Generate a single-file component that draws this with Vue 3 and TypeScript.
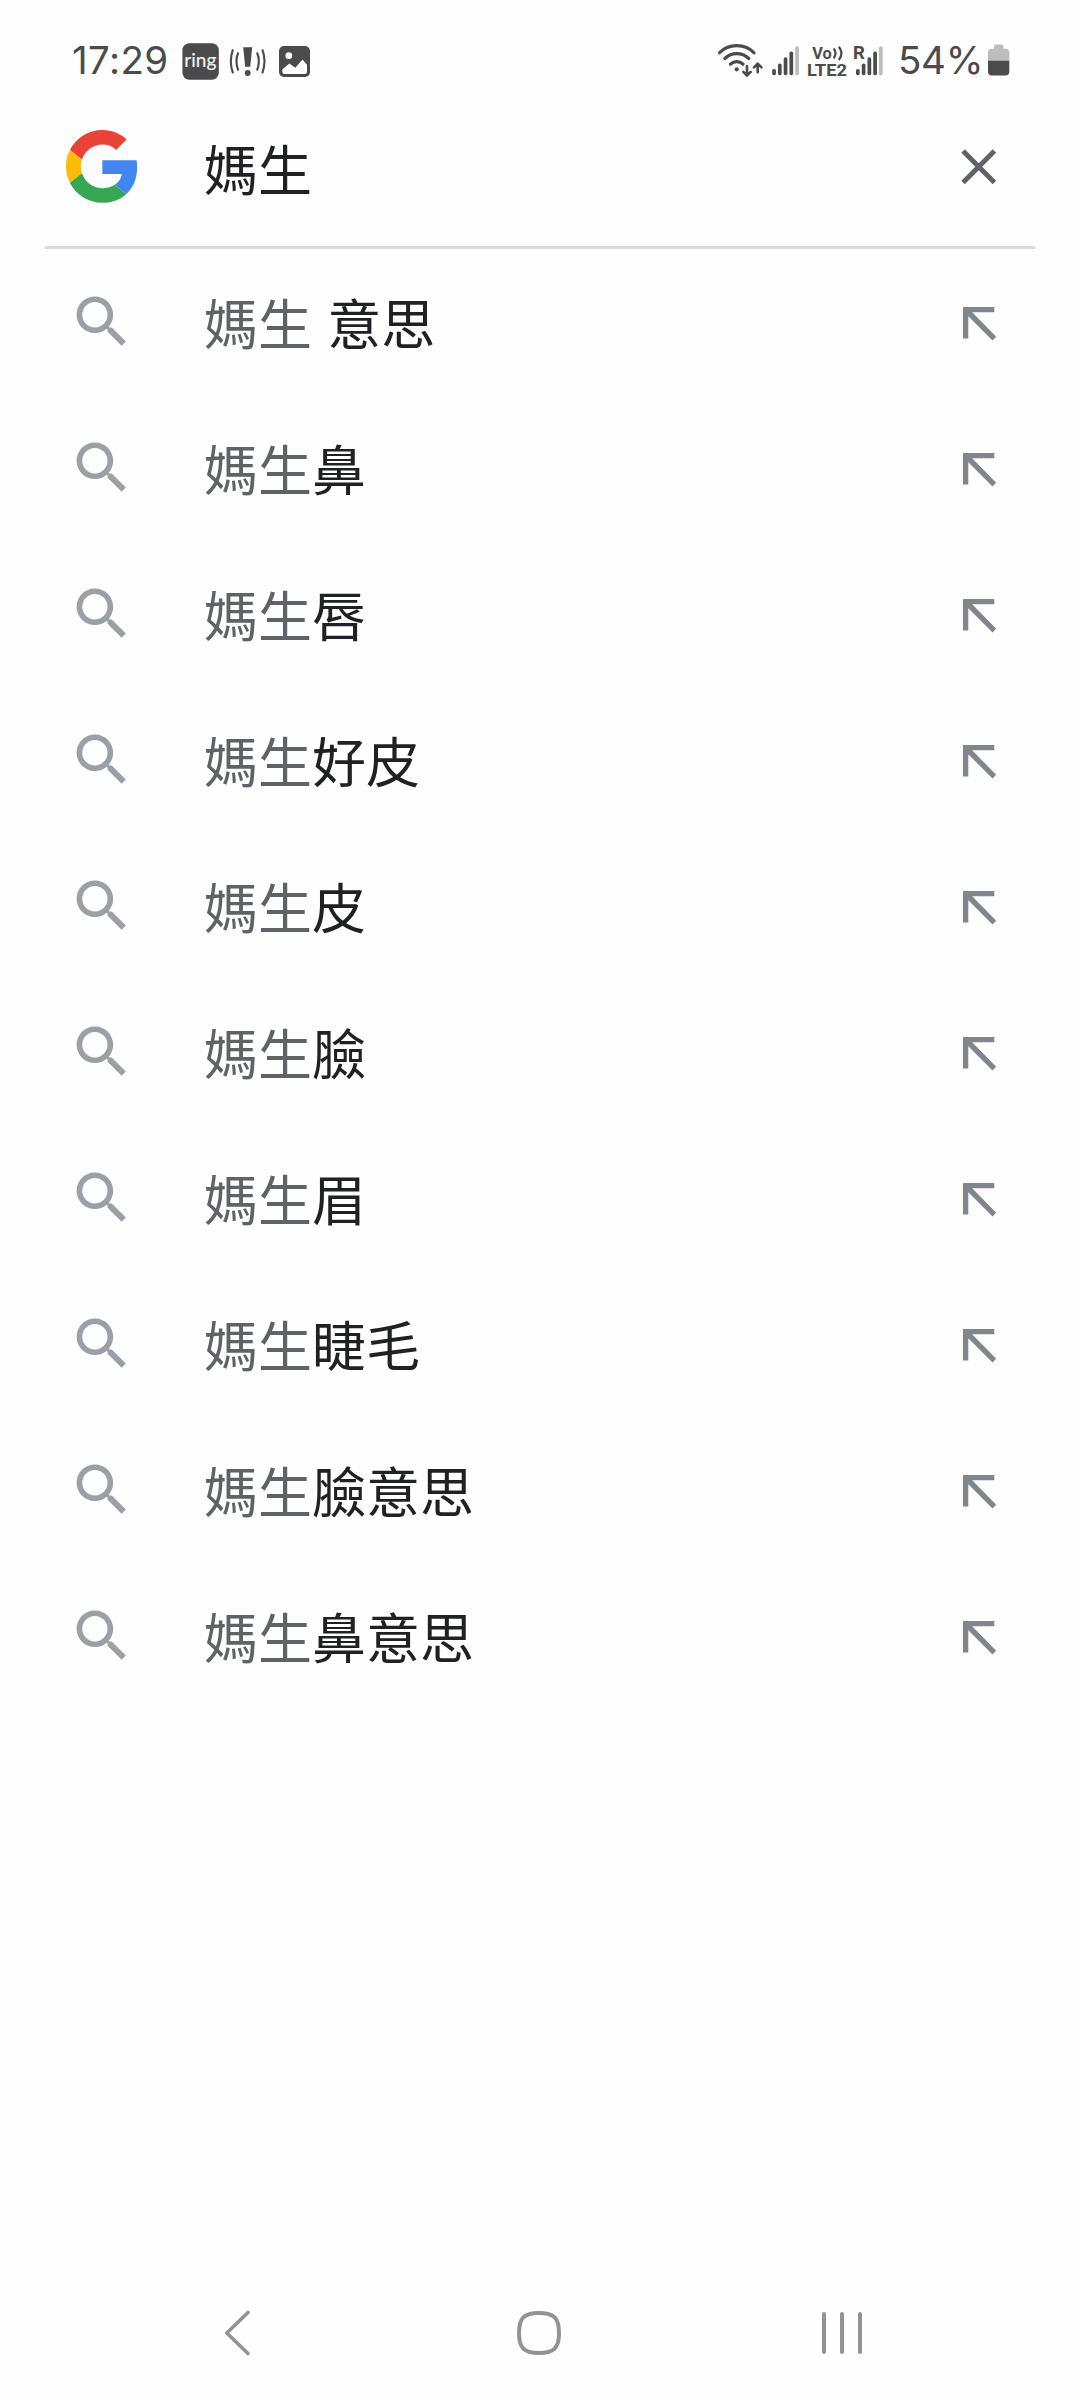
<script setup lang="ts">
interface Suggestion {
  typed: string
  rest: string
}

interface Bar {
  x: number
  top: number
  dim: boolean
}

const query = '媽生'

const suggestions: Suggestion[] = [' 意思', '鼻', '唇', '好皮', '皮', '臉', '眉', '睫毛', '臉意思', '鼻意思'].map(
  (rest) => ({ typed: query, rest }),
)

const makeBars = (start: number): Bar[] =>
  [69, 63.5, 57.2, 51.6, 46.2].map((top, i) => ({ x: start + i * 5.75, top, dim: i === 4 }))

const simOne = makeBars(772.2)
const simTwo = makeBars(856)
</script>

<template>
  <div class="screen">
    <header class="status">
      <span class="clock">17:29</span>
      <svg class="ring" width="38" height="42" viewBox="182 40 38 42">
        <rect x="182.4" y="43.2" width="36.4" height="36.6" rx="7" fill="#4b4b4b" />
        <text x="200.3" y="67.4" text-anchor="middle" font-size="20" textLength="32" lengthAdjust="spacingAndGlyphs" fill="#f0f0f0" stroke="#f0f0f0" stroke-width="0.2">ring</text>
      </svg>
      <svg class="alert" width="38" height="42" viewBox="229 40 38 42" fill="none" stroke="#4b4b4b" stroke-width="2.1">
        <path d="M233 49.3Q228.6 61 233 73.3M238.3 52.5Q234.6 61 238.3 70.5M262.3 49.3Q266.7 61 262.3 73.3M257 52.5Q260.7 61 257 70.5" />
        <path d="M243.2 47.2H252.2L250.2 66.7H245.2Z" fill="#4b4b4b" stroke="none" />
        <circle cx="247.7" cy="73" r="2.9" fill="#4b4b4b" stroke="none" />
      </svg>
      <svg class="photo" width="32" height="42" viewBox="279 40 32 42">
        <rect x="279" y="46" width="31" height="31" rx="5" fill="#4b4b4b" />
        <circle cx="288.8" cy="55.7" r="3.4" fill="#fff" />
        <path d="M282.3 69.5 289.3 63.5 295.3 67.8 302.5 59.5 307 64.7V71.5Q307 74 304.5 74H284.8Q282.3 74 282.3 71.5Z" fill="#fff" />
      </svg>
      <span class="gap"></span>
      <svg width="48" height="42" viewBox="716 40 48 42" fill="none" stroke="#4b4b4b" stroke-width="3.2" stroke-linecap="round" stroke-linejoin="round">
        <path d="M719.5 52.8Q726 45.6 736.8 45.6T754 52.8M724.8 58.5Q730 53.6 736.8 53.6T748.8 58.5M730.5 64.2Q733.3 61.6 736.8 61.6T743 64.2" />
        <circle cx="736.7" cy="69.3" r="2.1" fill="#4b4b4b" stroke="none" />
        <path d="M747 66V75M743.3 71.8 747 75.5 750.7 71.8M757.7 72.3V64M754 67.3 757.7 63.6 761.4 67.3" stroke-width="2.6" />
      </svg>
      <svg class="sim" width="29" height="42" viewBox="771 40 29 42">
        <rect v-for="b in simOne" :key="b.x" :x="b.x" :y="b.top" width="3.7" :height="75.3 - b.top" rx="1.7" :fill="b.dim ? '#bdbdbd' : '#4b4b4b'" />
      </svg>
      <svg class="volte" width="42" height="42" viewBox="807 40 42 42" fill="#4b4b4b">
        <text x="812.2" y="59" font-size="16.5" textLength="19.5" lengthAdjust="spacingAndGlyphs">Vo</text>
        <path d="M833.7 48.5Q837.4 53 833.7 58.3M838.8 46.8Q844.2 53 838.8 60" fill="none" stroke="#4b4b4b" stroke-width="2.2" />
        <text x="807" y="76" font-size="16.5" textLength="40" lengthAdjust="spacingAndGlyphs">LTE2</text>
      </svg>
      <svg class="roam" width="32" height="42" viewBox="853 40 32 42" fill="#4b4b4b">
        <text x="853" y="59.2" font-size="18.5">R</text>
        <rect v-for="b in simTwo" :key="b.x" :x="b.x" :y="b.top" width="3.7" :height="75.3 - b.top" rx="1.7" :fill="b.dim ? '#bdbdbd' : '#4b4b4b'" />
      </svg>
      <span class="percent">54%</span>
      <svg width="22" height="42" viewBox="988 40 22 42">
        <path d="M994 48.7V46.5Q994 44.5 996 44.5H1001.5Q1003.5 44.5 1003.5 46.5V48.7H1005.5Q1009.3 48.7 1009.3 52.5V61H988V52.5Q988 48.7 991.8 48.7Z" fill="#bdbdbd" />
        <path d="M988 60.8H1009.3V71.5Q1009.3 75.5 1005.3 75.5H992Q988 75.5 988 71.5Z" fill="#4b4b4b" />
      </svg>
    </header>

    <div class="search">
      <svg class="logo" width="72.7" height="72.7" viewBox="0 0 48 48">
        <path fill="#EA4335" d="M24 9.5c3.54 0 6.71 1.22 9.21 3.6l6.85-6.85C35.9 2.38 30.47 0 24 0 14.62 0 6.51 5.38 2.56 13.22l7.98 6.19C12.43 13.72 17.74 9.5 24 9.5z" />
        <path fill="#4285F4" d="M46.98 24.55c0-1.57-.15-3.09-.38-4.55H24v9.02h12.94c-.58 2.96-2.26 5.48-4.78 7.18l7.73 6c4.51-4.18 7.09-10.36 7.09-17.65z" />
        <path fill="#FBBC05" d="M10.53 28.59c-.48-1.45-.76-2.99-.76-4.59s.27-3.14.76-4.59l-7.98-6.19C.92 16.46 0 20.12 0 24c0 3.88.92 7.54 2.56 10.78l7.97-6.19z" />
        <path fill="#34A853" d="M24 48c6.48 0 11.93-2.13 15.89-5.81l-7.73-6c-2.15 1.45-4.92 2.3-8.16 2.3-6.26 0-11.57-4.22-13.47-9.91l-7.98 6.19C6.51 42.62 14.62 48 24 48z" />
      </svg>
      <span class="text query">{{ query }}</span>
      <svg class="clear" width="36" height="36" viewBox="0 0 36 36">
        <path d="M2.1 2.1 33.4 33.4M33.4 2.1 2.1 33.4" stroke="#5f6368" stroke-width="4.9" />
      </svg>
    </div>

    <main class="list">
      <div v-for="s in suggestions" :key="s.rest" class="row">
        <svg class="lens" width="52" height="52" viewBox="2.79 2.84 18.47 18.47">
          <path d="M15.5 14h-.79l-.28-.27C15.41 12.59 16 11.11 16 9.5 16 5.91 13.09 3 9.5 3S3 5.91 3 9.5 5.91 16 9.5 16c1.61 0 3.09-.59 4.23-1.57l.27.28v.79l5 4.99L20.49 19l-4.99-5zm-6 0C7.01 14 5 11.99 5 9.5S7.01 5 9.5 5 14 7.01 14 9.5 11.99 14 9.5 14z" fill="#9aa0a6" />
        </svg>
        <span class="text"><span class="typed">{{ s.typed }}</span>{{ s.rest }}</span>
        <svg class="fill" width="34" height="34" viewBox="0 0 34 34">
          <path d="M0 0H31.3V5.3H9.2L33.2 29.8 29.5 33.5 5.3 9.3V31.5H0Z" fill="#80868b" />
        </svg>
      </div>
    </main>

    <nav class="nav">
      <svg width="28" height="48" viewBox="0 0 28 48" fill="none" stroke="#939393" stroke-width="3.6" stroke-linecap="round" stroke-linejoin="round">
        <path d="M25 3.5 3.8 24 25 44.5" />
      </svg>
      <svg class="home" width="46" height="48" viewBox="0 0 46 48" fill="none" stroke="#939393" stroke-width="4">
        <path d="M23 4C38 4 43 9 43 24S38 44 23 44 3 39 3 24 8 4 23 4Z" />
      </svg>
      <svg class="recents" width="42" height="48" viewBox="0 0 42 48" stroke="#939393" stroke-width="4" stroke-linecap="round">
        <path d="M3 5V43M21 5V43M39 5V43" />
      </svg>
    </nav>
  </div>
</template>

<style>
body {
  background: #fefefe;
}
</style>

<style scoped>
.screen {
  box-sizing: border-box;
  display: flex;
  flex-direction: column;
  width: 1080px;
  height: 2400px;
  overflow: hidden;
  background: #fefefe;
  color: #202124;
  font-family: Roboto, 'Noto Sans CJK TC', sans-serif;
}

svg {
  display: block;
  flex: none;
}

.status {
  display: flex;
  height: 42px;
  padding: 40px 70px 0 72px;
  color: #4b4b4b;
  font-family: Inter, Roboto, sans-serif;
}

.ring {
  font-family: Lato, sans-serif;
}

.clock,
.percent {
  flex: none;
  font-size: 38.5px;
  font-weight: 370;
  line-height: 40px;
  white-space: nowrap;
}

.clock {
  width: 110px;
  letter-spacing: 0.4px;
}

.alert {
  margin-left: 9px;
}

.photo {
  margin-left: 12px;
}

.gap {
  flex: 1;
}

.sim {
  margin-left: 7px;
}

.volte,
.roam {
  font-family: Roboto, sans-serif;
  font-weight: 700;
}

.volte {
  margin-left: 7px;
}

.roam {
  margin-left: 4px;
}

.percent {
  width: 90px;
  margin-left: 13px;
  letter-spacing: -0.3px;
}

.search {
  display: flex;
  align-items: flex-start;
  box-sizing: border-box;
  height: 167px;
  margin: 0 45px;
  padding: 48px 38px 0 21px;
  border-bottom: 3px solid #dadada;
}

.text {
  flex: 1;
  font-size: 54px;
  line-height: 80px;
  white-space: pre;
  word-spacing: 1.9px;
}

.query {
  margin: 3px 0 0 65.3px;
}

.clear {
  margin-top: 19px;
}

.list {
  flex: 1;
}

.row {
  display: flex;
  align-items: flex-start;
  box-sizing: border-box;
  height: 146px;
  padding: 36px 83px 0 76px;
}

.lens {
  margin-top: 11px;
}

.row .text {
  margin: 2px 0 0 76px;
}

.typed {
  color: #5f6368;
}

.fill {
  margin-top: 22px;
}

.nav {
  display: flex;
  align-items: flex-start;
  height: 91px;
  padding-left: 223px;
}

.home {
  margin-left: 265px;
}

.recents {
  margin-left: 259px;
}
</style>
